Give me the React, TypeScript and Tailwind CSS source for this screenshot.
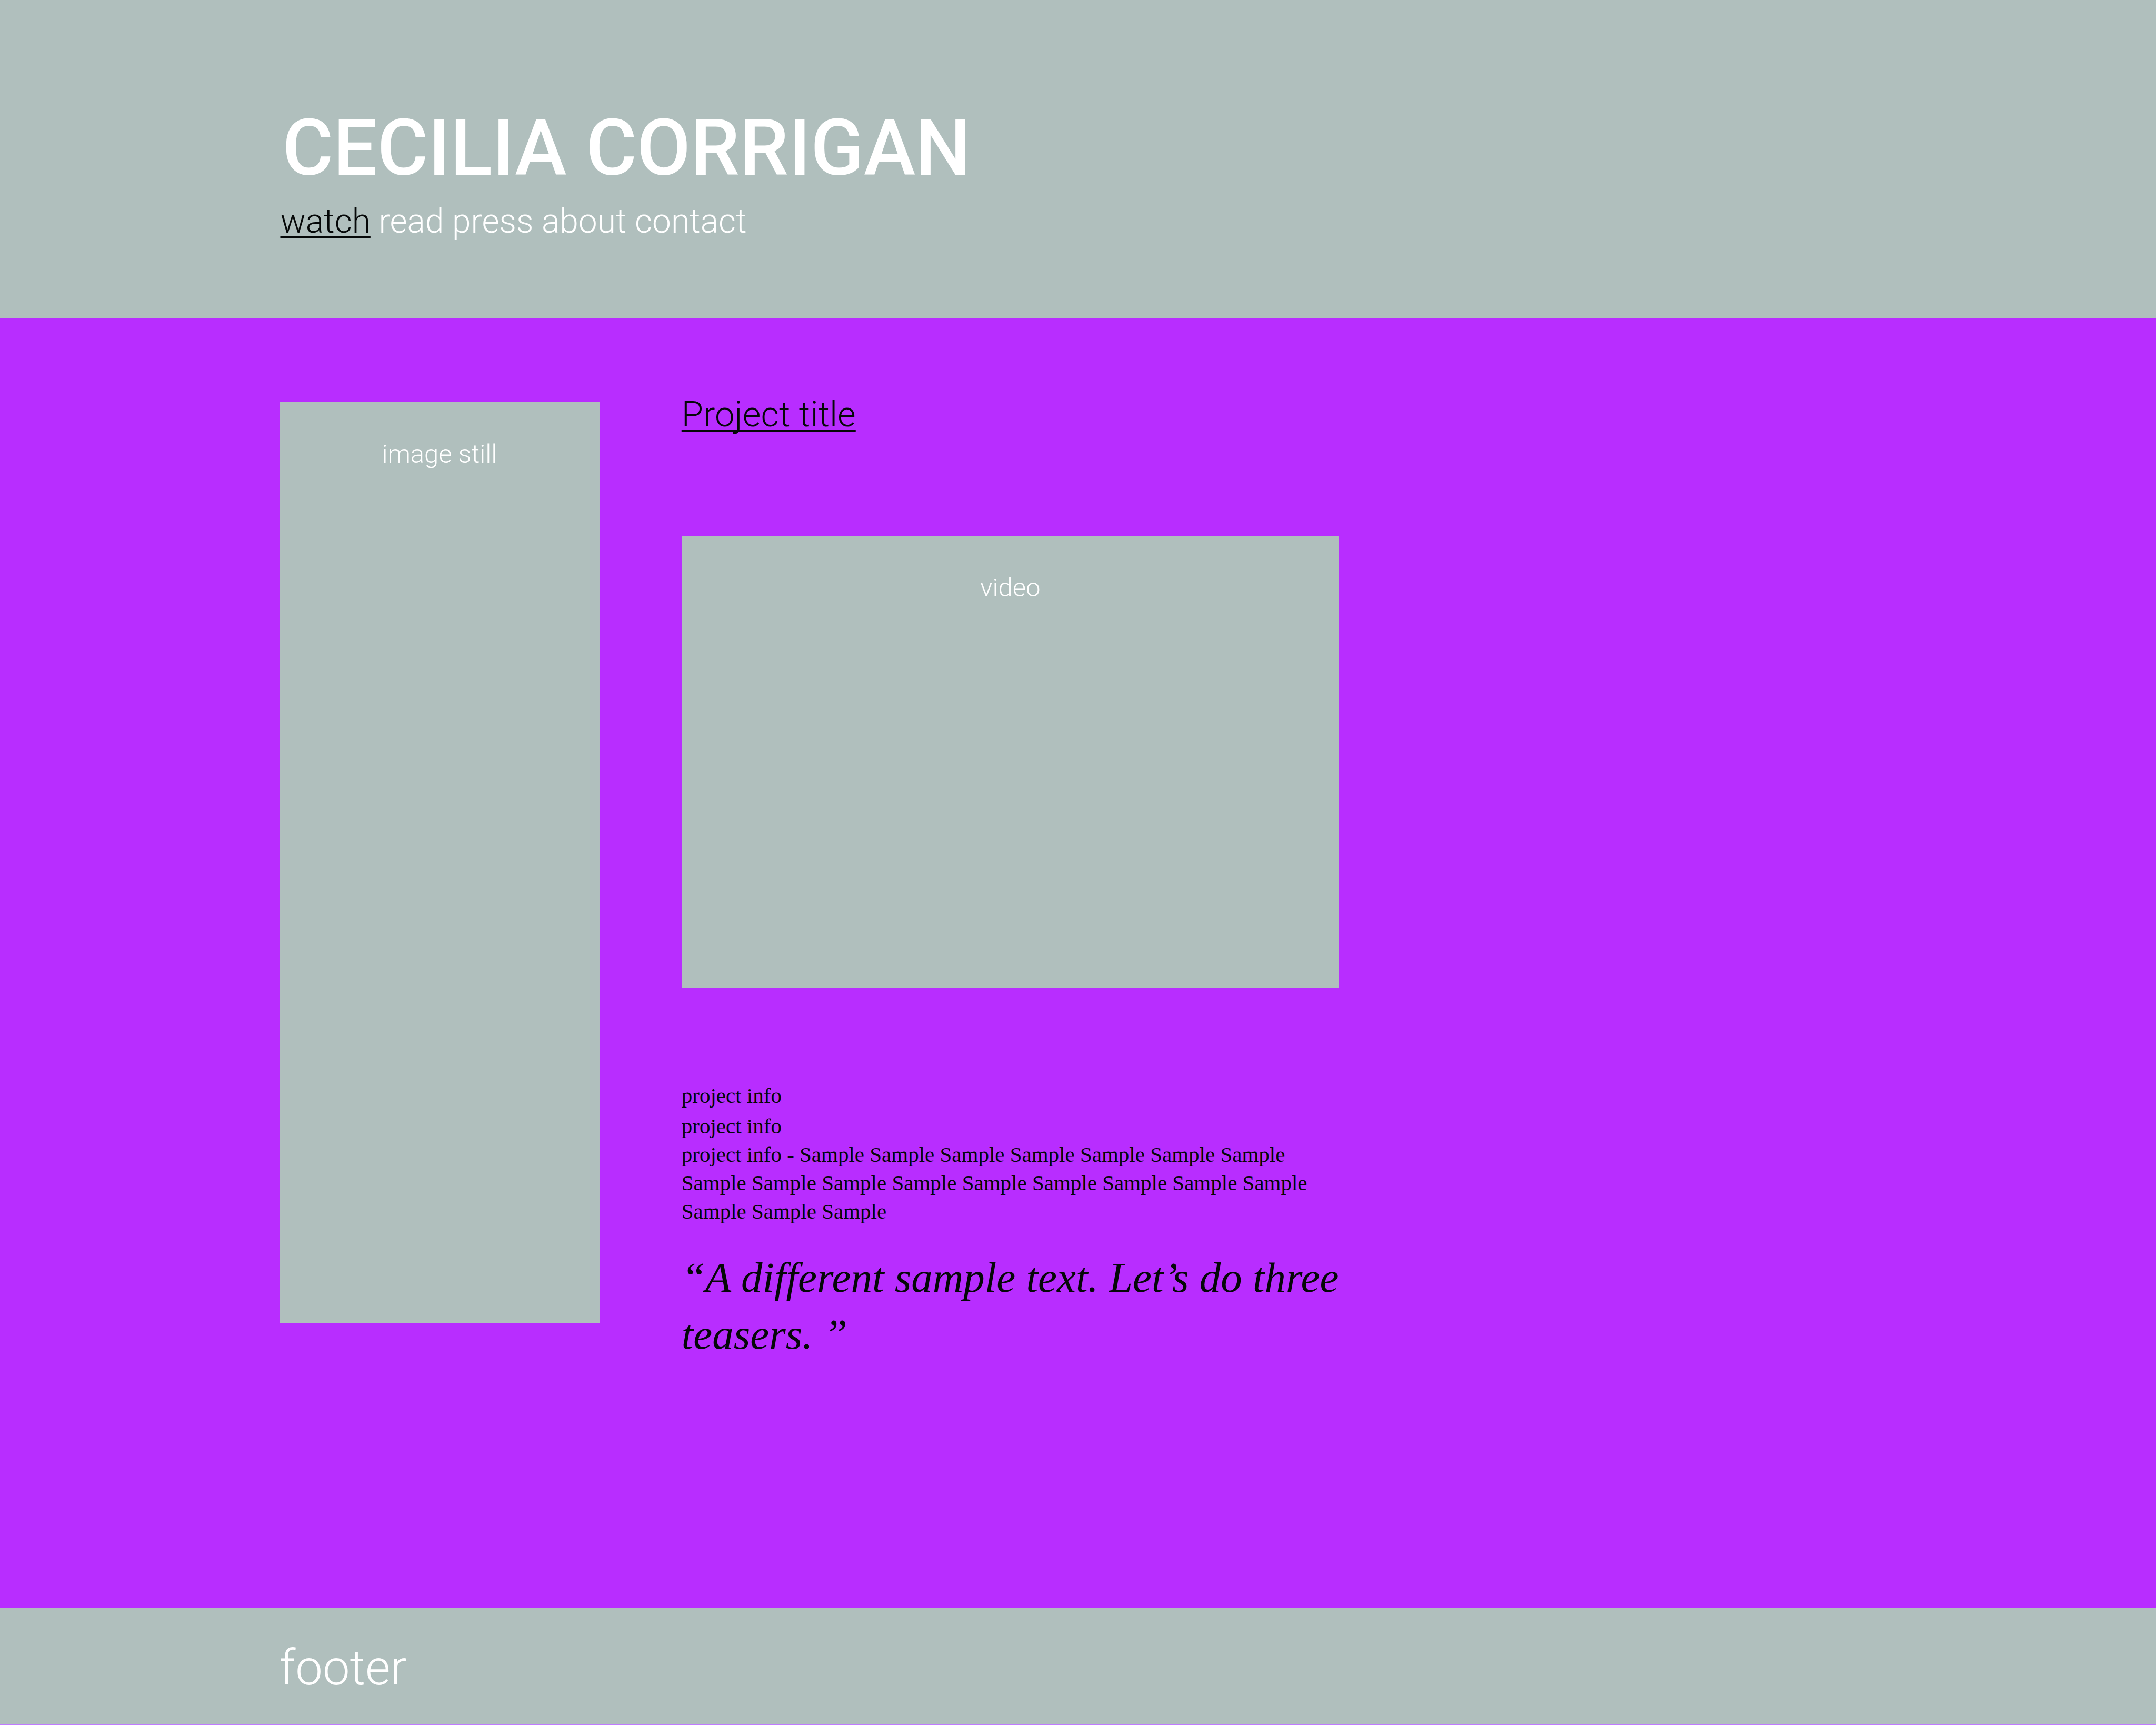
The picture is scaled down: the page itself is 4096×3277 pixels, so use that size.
const navItems = ["watch", "read", "press", "about", "contact"];

function SiteHeader() {
  return (
    <header className="bg-[#b0bfbd] pt-[202px] pr-8 pb-[145px] pl-[13%] text-white">
      <h1 className="pl-1 text-[148px] leading-[160px] font-medium">CECILIA CORRIGAN</h1>
      <nav aria-label="Main" className="mt-[19px] -mb-px text-[64px] leading-[80px] font-light">
        {navItems.map((item, i) => (
          <span key={item}>
            {i > 0 && " "}
            <a
              href={`#${item}`}
              aria-current={i === 0 ? "page" : undefined}
              className={
                i === 0
                  ? "text-[#050808] underline decoration-[4px] underline-offset-[7px]"
                  : "text-white"
              }
            >
              {item}
            </a>
          </span>
        ))}
      </nav>
    </header>
  );
}

function ProjectDetail() {
  return (
    <article className="text-[#050808]">
      <h2 className="text-[67px] leading-[46px] font-light">
        <a
          href="#project"
          className="underline decoration-[4px] underline-offset-[7px] [text-decoration-skip-ink:none]"
        >
          Project title
        </a>
      </h2>
      <div className="mt-[208px] aspect-[1249/858] bg-[#b0bfbd] pt-[67px] text-center text-[49px] leading-[64px] font-light text-white">
        video
      </div>
      <div className="mt-[178px] font-['Liberation_Serif',serif] text-[41px] leading-[54px]">
        <p className="mb-1">project info</p>
        <p>project info</p>
        <p>
          project info - Sample Sample Sample Sample Sample Sample Sample Sample Sample Sample
          Sample Sample Sample Sample Sample Sample Sample Sample Sample
        </p>
      </div>
      <blockquote className="mt-[45px] font-['Liberation_Serif',serif] text-[81px] leading-[108px] italic">
        “A different sample text. Let’s do three teasers. ”
      </blockquote>
    </article>
  );
}

export default function App() {
  return (
    <div className="flex min-h-screen flex-col bg-[#b82dff] font-[Roboto,sans-serif]">
      <SiteHeader />
      <main className="grid flex-1 grid-cols-[608fr_1249fr] items-start gap-[156px] pt-[159px] pr-[37.9%] pb-16 pl-[12.96%]">
        <aside className="aspect-[608/1749] bg-[#b0bfbd] pt-[67px] text-center text-[49px] leading-[64px] font-light text-white">
          image still
        </aside>
        <ProjectDetail />
      </main>
      <footer className="border-b border-[#c07aff] bg-[#b0bfbd] pt-[67px] pb-[59px] pl-[12.96%] text-[92px] leading-[96px] font-light text-white">
        footer
      </footer>
    </div>
  );
}
